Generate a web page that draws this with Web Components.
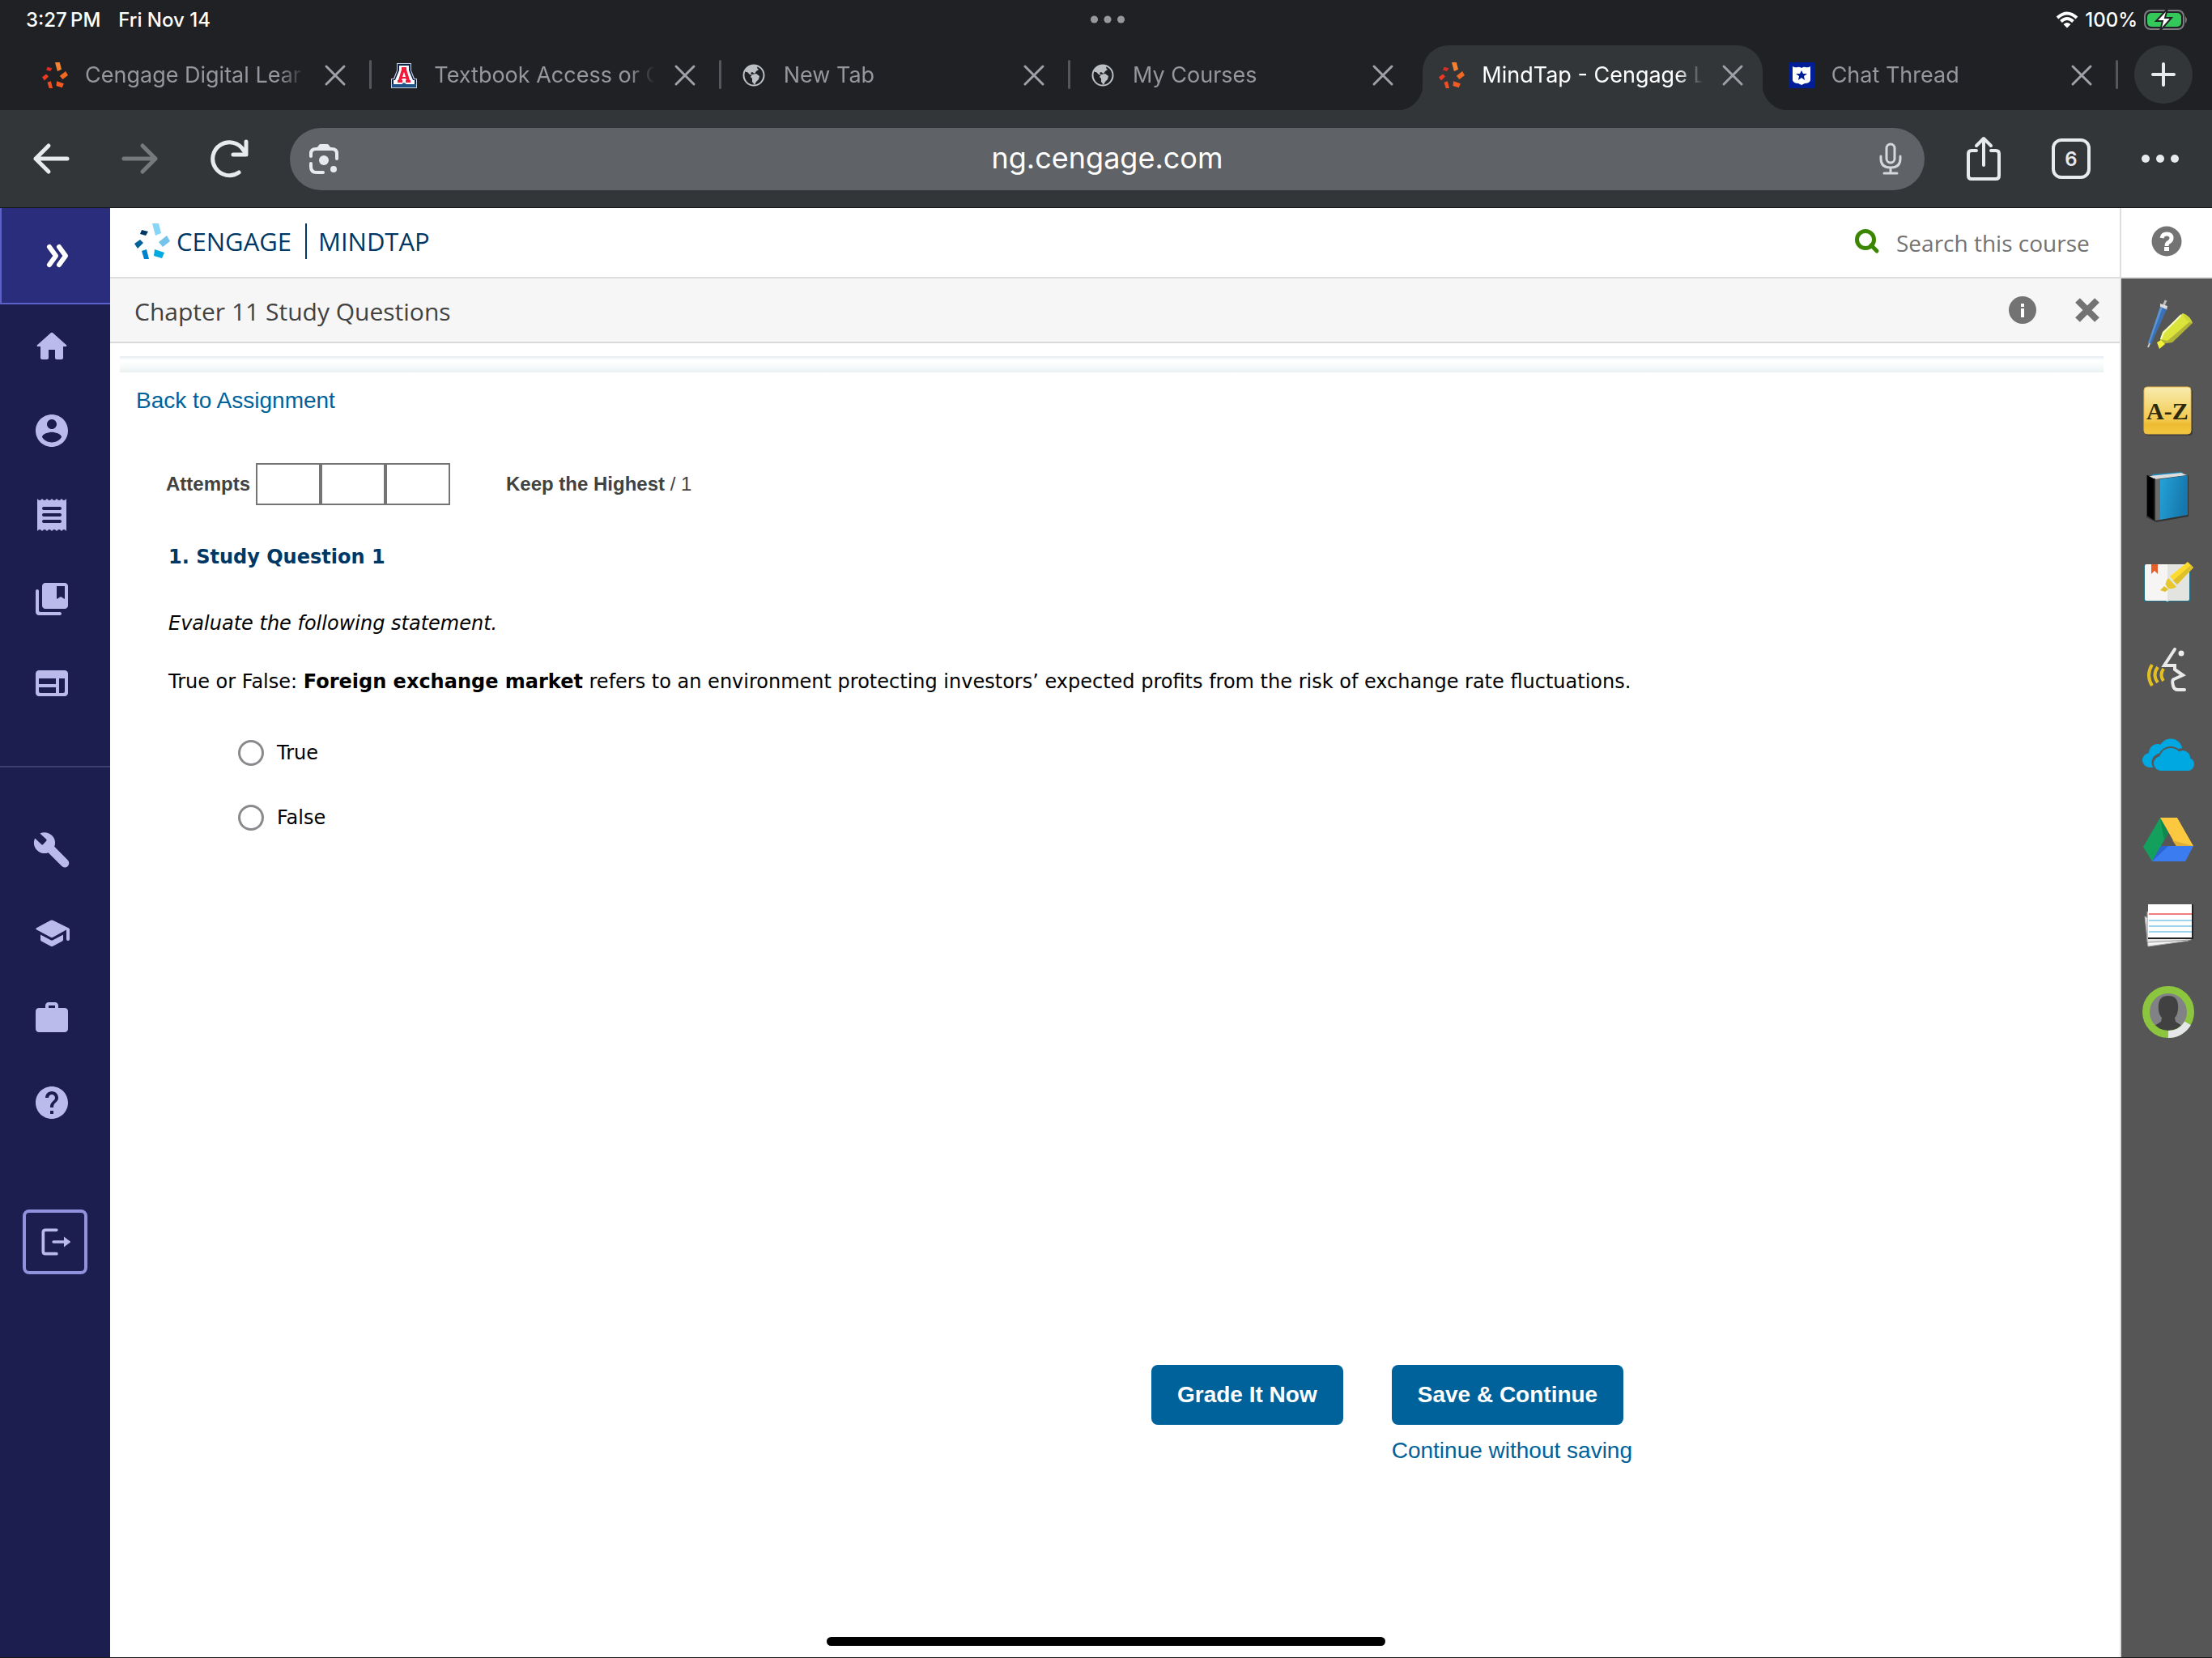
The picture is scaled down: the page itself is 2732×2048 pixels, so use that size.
<!DOCTYPE html>
<html lang="en">
    <head>
        <meta charset="UTF-8" />
        <meta name="viewport" content="width=device-width, initial-scale=1.0" />
        <title>MindTap - Cengage Learning</title>
        <style>
            body {
                --ui: Inter, "Liberation Sans", sans-serif;
                --brand: "Open Sans", "Noto Sans", sans-serif;
                --text: "Liberation Sans", Helvetica, Arial, sans-serif;
                --wide: "DejaVu Sans", Verdana, sans-serif;
                display: flex;
                flex-direction: column;
                box-sizing: border-box;
                min-height: 100vh;
                margin: 0;
                background: #fff;
                border-bottom: 1px solid #1a1a1a;
                font-family: var(--text);
            }
        </style>
    </head>
    <body>
        <browser-chrome>
            <status-bar></status-bar>
            <tab-strip>
                <browser-tab icon="cengage">Cengage Digital Lear</browser-tab>
                <browser-tab icon="arizona">Textbook Access or C</browser-tab>
                <browser-tab icon="globe">New Tab</browser-tab>
                <browser-tab icon="globe" last>My Courses</browser-tab>
                <browser-tab icon="cengage" active>MindTap - Cengage L</browser-tab>
                <browser-tab icon="shield">Chat Thread</browser-tab>
            </tab-strip>
            <tool-bar></tool-bar>
        </browser-chrome>
        <course-shell>
            <side-nav slot="nav"></side-nav>
            <course-header slot="header">Chapter 11 Study Questions</course-header>
            <study-question>
                <span slot="title">1. Study Question 1</span>
                <em slot="lead">Evaluate the following statement.</em>
                <span slot="body">True or False: <b>Foreign exchange market</b> refers to an environment protecting investors’ expected profits from the risk of exchange rate fluctuations.</span>
                <answer-option slot="answers" value="true">True</answer-option>
                <answer-option slot="answers" value="false">False</answer-option>
            </study-question>
            <app-dock slot="dock"></app-dock>
        </course-shell>
        <home-indicator></home-indicator>

        <script>
            // the six petals of the Cengage mark, clockwise from the top
            const star = (c) => `<svg viewBox="0 0 44 44">
                <path fill="${c[0]}" d="M22 0h8l3 12-7 3z"/>
                <path fill="${c[1]}" d="M40 15l4 7-9 7-5-6z"/>
                <path fill="${c[2]}" d="M25 32l12 4-3 7-10-3z"/>
                <path fill="${c[3]}" d="M9 34l6-2 3 12h-6z"/>
                <path fill="${c[4]}" d="M0 25l7-5 4 4-7 7z"/>
                <path fill="${c[5]}" d="M9 8l8 2-3 5-7-2z"/></svg>`;
            const material = (d) => `<svg viewBox="0 0 24 24" fill="currentColor" fill-rule="evenodd"><path d="${d}"/></svg>`;
            const line = (box, w, body) => `<svg viewBox="0 0 ${box}" fill="none" stroke="currentColor" stroke-width="${w}" stroke-linecap="round" stroke-linejoin="round">${body}</svg>`;

            const icons = {
                cengage: star(["#f58232", "#f26a21", "#f15a22", "#f04e23", "#ee3a24", "#dc2e27"]),
                brand: star(["#87d6f9", "#74c3ea", "#00a9e0", "#0082ca", "#00629b", "#003865"]),
                arizona: `<svg viewBox="0 0 32 32"><path fill="#c8d0dc" d="M7 1h18v9l4 10h3v12H0V20h3L7 10z"/><path fill="#0c234b" d="M8 2h16v8l4 11h3v7H1v-7h3L8 10z"/><path fill="#fff" d="M10 4h12v6l5 12h2v5H3v-5h2l5-12z"/><path fill="#ef1a3c" d="M13 6h6v3l4 13h1v3h-6v-3h1l-1-2h-4l-1 2h1v3H8v-3h1l4-13zm3 6l-2 6h4z"/><path fill="#1e5288" d="M1 27h12l3-2 3 2h12v4H1z"/></svg>`,
                globe: `<svg viewBox="0 0 32 32"><circle cx="16" cy="16" r="12.5" fill="#202124" stroke="#bdc1c6" stroke-width="2"/><path fill="#bdc1c6" d="M5 9C8 4 15 2 21 4l-1 3 2 2-3 2-2 3-3-2-2 1 2 3-3-1-3-3-2 0zM14 15l5-1 4 3-1 4-3 3-2 4-3-4v-4l-2-2z"/></svg>`,
                shield: `<svg viewBox="0 0 32 32"><path fill="#001e98" d="M0 0h32v32H0z"/><path fill="#fff" d="M5 5q3 2 6 1 2-1 5 1 3-2 5-1 3 1 6-1v17q-1 4-7 4l-4 2-4-2q-6 0-7-4z"/><path fill="#001e98" d="M16 10l2 4h5l-4 3 1 5-4-3-4 3 1-5-4-3h5z"/></svg>`,
                close: line("32 32", 3, `<path d="M5 5l22 22M27 5L5 27"/>`),
                plus: line("32 32", 4, `<path d="M16 3v26M3 16h26"/>`),
                wifi: `<svg viewBox="0 0 28 21" fill="none" stroke="#fff" stroke-width="4"><path d="M2 8q12-11 24 0M6.500 12.500q7.500-7 15 0"/><path fill="#fff" stroke="none" d="M9.500 16q4.500-4 9 0L14 20.500z"/></svg>`,
                battery: `<svg viewBox="0 0 56 28"><rect x="1" y="3" width="48" height="23" rx="7" fill="none" stroke="#7c7d80" stroke-width="2"/><rect x="4" y="6" width="42" height="17" rx="5" fill="#34c759"/><path fill="#7c7d80" d="M51 10q4 4 0 9z"/><path d="M29 1L15 16h8l-3 12 14-16h-8z" fill="#fff" stroke="#202124" stroke-width="2"/></svg>`,
                back: line("48 48", 5, `<path d="M44 24H5M21 8L5 24l16 16"/>`),
                forward: line("48 48", 5, `<path d="M4 24h39M27 8l16 16-16 16"/>`),
                reload: line("48 48", 5, `<path d="M36 41A20.500 20.500 0 1 1 42 14M45 3v16H29"/>`),
                lens: `<svg viewBox="0 0 40 40" fill="none" stroke="currentColor" stroke-width="4" stroke-linecap="round"><path d="M4 17v-3q0-6 6-6h20q6 0 6 6v6M4 26v4q0 7 7 7h8"/><path fill="currentColor" stroke="none" d="M10 8l5-6h10l5 6z"/><circle cx="20" cy="22" r="6" fill="currentColor" stroke="none"/><circle cx="32" cy="33" r="4" fill="currentColor" stroke="none"/></svg>`,
                mic: line("32 40", 3, `<rect x="11" y="2" width="10" height="23" rx="5"/><path d="M4 17v3q0 11 12 11t12-11v-3M16 31v7M8 38h16"/>`),
                share: line("44 56", 4, `<path d="M13 18H7q-4 0-4 4v27q0 4 4 4h30q4 0 4-4V22q0-4-4-4h-6M22 36V4M13 12l9-9 9 9"/>`),
                more: `<svg viewBox="0 0 48 12" fill="currentColor"><circle cx="6" cy="6" r="5"/><circle cx="24" cy="6" r="5"/><circle cx="42" cy="6" r="5"/></svg>`,
                expand: line("48 48", 6, `<path d="M14 13l8 11-8 11M26 13l8 11-8 11"/>`),
                home: material("M10 19v-5h4v5c0 .55.45 1 1 1h3c.55 0 1-.45 1-1v-7h1.700c.46 0 .68-.57.33-.87L12.670 3.600c-.38-.34-.96-.34-1.340 0l-8.360 7.530c-.34.3-.13.87.33.87H5v7c0 .55.45 1 1 1h3c.55 0 1-.45 1-1z"),
                account: material("M12 2C6.480 2 2 6.480 2 12s4.480 10 10 10 10-4.480 10-10S17.520 2 12 2zm0 3c1.660 0 3 1.340 3 3s-1.340 3-3 3-3-1.340-3-3 1.340-3 3-3zm0 14.200c-2.500 0-4.710-1.280-6-3.220.03-1.990 4-3.080 6-3.080 1.990 0 5.970 1.090 6 3.080-1.290 1.940-3.500 3.220-6 3.220z"),
                receipt: material("M3 2q1.500 2 3 0 1.500 2 3 0 1.500 2 3 0 1.500 2 3 0 1.500 2 3 0 1.500 2 3 0v20q-1.500-2-3 0-1.500-2-3 0-1.500-2-3 0-1.500-2-3 0-1.500-2-3 0-1.500-2-3 0zM7 7a1 1 0 0 0 0 2h10a1 1 0 0 0 0-2zM7 11a1 1 0 0 0 0 2h10a1 1 0 0 0 0-2zM7 15a1 1 0 0 0 0 2h10a1 1 0 0 0 0-2z"),
                library: material("M3 6c-.55 0-1 .45-1 1v13c0 1.100.9 2 2 2h13c.55 0 1-.45 1-1s-.45-1-1-1H5c-.55 0-1-.45-1-1V7c0-.55-.45-1-1-1zM20 2H8c-1.100 0-2 .9-2 2v12c0 1.100.9 2 2 2h12c1.100 0 2-.9 2-2V4c0-1.100-.9-2-2-2zm0 10l-2.500-1.500L15 12V4h5z"),
                web: material("M20 4H4c-1.100 0-2 .9-2 2v12c0 1.100.9 2 2 2h16c1.100 0 2-.9 2-2V6c0-1.100-.9-2-2-2zM4 9h10.500v3.500H4zM4 14.500h10.500V18H5q-1 0-1-1zM16.500 9H20v8q0 1-1 1h-2.500z"),
                wrench: material("M21.900 18.200l-8.300-8.300c.9-2.300.4-5-1.500-6.900-2-2-5-2.400-7.400-1.300L8.600 5.400q.5.500 0 1L6.600 8.500q-.5.500-1 0L1.600 4.700C.4 7.100.9 10.100 2.900 12.100c1.900 1.900 4.600 2.400 6.900 1.500l8.300 8.300a2.600 2.600 0 0 0 3.800-3.700z"),
                school: material("M5 12.200v3q0 .8.700 1.200l5.400 2.900q.9.500 1.800 0l5.400-2.900q.7-.4.700-1.200v-3l-6.100 3.300q-.9.500-1.800 0zM11.100 3.500L2.500 8.100q-.9.500 0 1l8.600 4.700q.9.500 1.800 0L21 9.300V15a1 1 0 0 0 2 0V9q0-.5-.5-.8L12.900 3.500q-.9-.5-1.800 0z"),
                work: material("M20 5.500h-4V4c0-1.100-.9-2-2-2h-4c-1.100 0-2 .9-2 2v1.500H4c-1.100 0-2 .9-2 2v11c0 1.100.9 2 2 2h16c1.100 0 2-.9 2-2v-11c0-1.100-.9-2-2-2zM10 4h4v1.500h-4z"),
                help: material("M12 2C6.480 2 2 6.480 2 12s4.480 10 10 10 10-4.480 10-10S17.520 2 12 2zm1 17h-2v-2h2v2zm2.070-7.750l-.9.920C13.450 12.900 13 13.500 13 15h-2v-.5c0-1.100.45-2.100 1.170-2.830l1.240-1.260c.37-.36.590-.86.590-1.410 0-1.100-.9-2-2-2s-2 .9-2 2H8c0-2.210 1.790-4 4-4s4 1.790 4 4c0 .88-.36 1.680-.93 2.250z"),
                exit: line("48 48", 4, `<path d="M26 8H11q-3 0-3 3v26q0 3 3 3h15M22 24h20"/><path fill="currentColor" stroke="none" d="M36 17l9 7-9 7z"/>`),
                search: `<svg viewBox="0 0 32 32" fill="none" stroke="#3a8600" stroke-width="5"><circle cx="14" cy="14" r="10.500"/><path stroke-linecap="round" d="M21 21l7 7"/></svg>`,
                question: `<svg viewBox="0 0 40 40"><circle cx="20" cy="20" r="18.500" fill="#737373"/><path fill="none" stroke="#fff" stroke-width="5" d="M14 16q1-5 6-5 6 0 6 5 0 3-3 5-3 1-3 5"/><path fill="#fff" d="M17 27h6v5h-6z"/></svg>`,
                info: `<svg viewBox="0 0 40 40"><circle cx="20" cy="20" r="17" fill="#737373"/><path fill="#fff" d="M18 12h4v4h-4zM18 18h4v11h-4z"/></svg>`,
                cross: `<svg viewBox="0 0 40 40" stroke="#737373" stroke-width="8"><path d="M8 8l24 24M32 8L8 32"/></svg>`,
                pens: `<svg viewBox="0 0 64 64"><path stroke="#bbb" stroke-width="3" d="M26 8l3-7"/><path fill="#ddd" d="M22 5l9 3-1 5-8-3z"/><path fill="#3b72b5" d="M22 9l8 3-19 43-4-1z"/><path fill="#5b93d3" d="M22 9l3 1L9 54H7z"/><path stroke="#ccc" stroke-width="2" d="M9 54l-2 5"/><path fill="#b1b436" d="M50 17q7 2 12 12L37 53l-14 2-1-6 3-9z"/><path fill="#dae43a" d="M50 17l10 9-29 25-9-2 3-9z"/><path fill="none" stroke="#f6f9c0" stroke-width="2" d="M48 19L26 41l-3 8"/><path fill="#cbd43a" d="M50 17q9 3 12 12-9-2-12-12z"/><path fill="#f3f03a" d="M18 53l5-3 5 5-7 6z"/></svg>`,
                glossary: `<svg viewBox="0 0 64 64"><linearGradient id="g" x2="0" y2="1"><stop stop-color="#f9ecb0"/><stop offset=".7" stop-color="#f2c94e"/><stop offset=".8" stop-color="#eebb30"/><stop offset="1" stop-color="#f1c741"/></linearGradient><rect x="4" y="4" width="58" height="58" rx="4" fill="#3c3c3c"/><rect x="2" y="2" width="58" height="58" rx="4" fill="url(#g)" stroke="#e9b640"/><text x="5" y="42" font-family="Liberation Serif, serif" font-size="30" font-weight="bold" fill="#2e290c">A-Z</text></svg>`,
                book: `<svg viewBox="0 0 64 64"><linearGradient id="g" x2="1" y2=".3"><stop stop-color="#25a3d8"/><stop offset="1" stop-color="#1577ad"/></linearGradient><path fill="#333" d="M5 5l52 0v51l-40 7-12-6z"/><path fill="#1b8fc4" d="M12 4l36-3 3 2-38 4z"/><path fill="#dcdcdc" d="M8 6l40-4 7 3-39 5z"/><path d="M6 5l9 5v51l-9-6z"/><path fill="#6b6b6b" d="M15 10h7v50l-7 1z"/><path fill="#222" d="M14 9h2v52h-2z"/><path fill="url(#g)" d="M22 10l34-5v49l-34 6z"/></svg>`,
                notebook: `<svg viewBox="0 0 64 64"><path fill="#1f6f86" d="M2 10h57v45H33l-2 2-3-2H2z"/><path fill="#f6f5f4" d="M5 9h26v46l-2-1H5q-2 0-2-2V11q0-2 2-2z"/><path fill="#e3e4e0" d="M31 9h25q2 0 2 2v41q0 2-2 2H33l-2 1z"/><path fill="#e65f2b" d="M11 9h8v12l-4-4-4 4z"/><path fill="#ffdb2d" d="M56 6l7 7-20 21-9-10z"/><path fill="#dfc02a" d="M60 10l3 3-20 21-5-5zM27 36l5 4-4 3-6-2z"/><path fill="#e7c72b" d="M32 26l10 11q-7 4-11 1-5-5 1-12z"/></svg>`,
                speak: `<svg viewBox="0 0 64 64" fill="none" stroke-width="4"><path stroke="#e9e9e9" stroke-linecap="round" d="M40 8L27 28h13v5l10 7-11 5q-3 1-1 8 1 5 6 5h8"/><circle cx="48" cy="13" r="3.500" fill="#eee"/><path stroke="#e3c022" d="M12 27q-8 13 0 26M19 30q-7 10 0 19M26 32q-5 8 0 15"/></svg>`,
                cloud: `<svg viewBox="0 0 64 64" fill="#00a8e2"><circle cx="9" cy="39" r="9"/><circle cx="19" cy="30" r="11"/><circle cx="35" cy="27" r="14.500"/><path d="M9 36h18v12H9z"/><g fill="#565656"><circle cx="23" cy="42" r="11.500"/><circle cx="35" cy="38" r="16"/><circle cx="50" cy="35" r="11"/></g><circle cx="23" cy="43" r="9"/><circle cx="35" cy="38" r="14"/><circle cx="50" cy="36" r="9"/><circle cx="56" cy="44" r="8"/><path d="M22 40h35v12H22z"/></svg>`,
                drive: `<svg viewBox="0 0 64 64"><path fill="#12a05c" d="M22 4l10 19-20 35L1 40z"/><path fill="#0c8a4d" d="M22 4l10 19-5 8z"/><path fill="#fbc840" d="M22 4h21l20 35H42z"/><path fill="#e0ae35" d="M37 32l26 7H42z"/><path fill="#3b7df0" d="M23 39h40L53 58H12z"/><path fill="#2b63cf" d="M23 39h9L12 58z"/></svg>`,
                cards: `<svg viewBox="0 0 64 64"><path fill="#f4f4f4" stroke="#aaa" d="M3 20l4 37 50-7z"/><path fill="#e4e4e4" stroke="#999" d="M6 14v38l54-3V14z"/><path fill="#fff" d="M7 5h55v42H7z"/><path fill="none" stroke="#222" stroke-width="2" d="M7 47h55V5"/><path stroke="#f07f7f" stroke-width="2" d="M8 17h53"/><path stroke="#9fd4ec" stroke-width="2" d="M8 25h53M8 32h53M8 39h53"/></svg>`,
                profile: `<svg viewBox="0 0 64 64"><circle cx="32" cy="32" r="24" fill="#808285"/><path fill="#414141" d="M15 49q5-3 8-5l1-5q-5-5-4-16 1-11 12-11t12 11q1 11-4 16l1 5q3 2 8 5-6 8-17 8t-17-8z"/><circle cx="32" cy="32" r="27.500" fill="none" stroke="#8cc63f" stroke-width="9"/><path fill="none" stroke="#e6e7e8" stroke-width="9" d="M32 59.500A27.500 27.500 0 0 0 56 46"/></svg>`,
            };

            const reset = `* { padding: 0; margin: 0; box-sizing: border-box; }
                :host { box-sizing: border-box; }
                button { border: 0; background: none; color: inherit; font: inherit; display: grid; place-items: center; }
                a { color: inherit; text-decoration: none; }
                input { min-width: 0; border: 0; background: none; outline: 0; }`;

            function define(name, css, html) {
                customElements.define(name, class extends HTMLElement {
                    constructor() {
                        super();
                        const temp = document.createElement("template");
                        const markup = typeof html === "function" ? html(this) : html;
                        temp.innerHTML = `<style>${reset} ${css}</style>${markup}`;
                        this.attachShadow({ mode: "open" }).append(temp.content.cloneNode(true));
                    }
                });
            }

            // size comes from --w / --h set by the parent
            define("ui-icon", `
                :host { display: block; flex: none; width: var(--w, 32px); height: var(--h, var(--w, 32px)); }
                svg { display: block; width: 100%; height: 100%; }
            `, (el) => icons[el.getAttribute("name")]);

            define("browser-chrome", `
                :host { display: block; background: #202124; font-family: var(--ui); border-bottom: 1px solid #151617; }
            `, `<slot></slot>`);

            define("status-bar", `
                :host { display: grid; grid-template-columns: 1fr auto 1fr; align-items: center; height: 56px; padding: 0 28px 8px 32px; color: #fff; font-size: 24px; font-weight: 500; }
                .left, .right { display: flex; align-items: center; }
                .left { gap: 22px; }
                .right { justify-content: flex-end; gap: 8px; }
                .dots { --w: 44px; --h: 12px; color: #98989c; }
                .wifi { --w: 28px; --h: 21px; }
                .battery { --w: 56px; --h: 28px; }
            `, `
                <div class="left"><span>3:27&#8239;PM</span><span>Fri Nov 14</span></div>
                <ui-icon class="dots" name="more"></ui-icon>
                <div class="right"><ui-icon class="wifi" name="wifi"></ui-icon><span>100%</span><ui-icon class="battery" name="battery"></ui-icon></div>
            `);

            define("tab-strip", `
                :host { display: flex; height: 80px; padding: 0 24px 0 26px; }
                .tabs { display: flex; flex: 1; min-width: 0; }
                button { width: 72px; height: 72px; margin-left: 22px; border-radius: 50%; background: #323639; color: #e8eaed; }
            `, `<div class="tabs"><slot></slot></div><button aria-label="New tab"><ui-icon name="plus"></ui-icon></button>`);

            define("browser-tab", `
                :host { position: relative; display: flex; flex: 1; min-width: 0; color: #96979e; padding: 0 6px; }
                .tab { display: flex; flex: 1; align-items: center; min-width: 0; padding: 0 21px 6px 20px; gap: 21px; }
                .title { flex: 1; min-width: 0; overflow: hidden; white-space: nowrap; font-size: 27px; line-height: 36px; text-align: left; mask-image: linear-gradient(to left, transparent, #000 32px); }
                .close { width: 32px; height: 32px; color: #a0a1a8; }
                :host(:not([active]):not([last]))::after { content: ""; position: absolute; right: -2px; top: 18px; width: 3px; height: 36px; border-radius: 2px; background: #56575c; }
                :host([active]) { color: #fff; z-index: 1; }
                :host([active]) .tab { position: relative; background: #323639; border-radius: 32px 32px 0 0; }
                :host([active]) .tab::before, :host([active]) .tab::after { content: ""; position: absolute; bottom: 0; width: 32px; height: 32px; }
                :host([active]) .tab::before { right: 100%; background: radial-gradient(circle at 0 0, transparent 32px, #323639 33px); }
                :host([active]) .tab::after { left: 100%; background: radial-gradient(circle at 100% 0, transparent 32px, #323639 33px); }
            `, (el) => `<div class="tab" role="tab"><ui-icon name="${el.getAttribute("icon")}"></ui-icon><span class="title"><slot></slot></span><button class="close" aria-label="Close tab"><ui-icon name="close"></ui-icon></button></div>`);

            define("tool-bar", `
                :host { display: flex; align-items: center; height: 120px; padding: 0 40px 0 39px; background: #323639; color: #e8eaed; }
                ui-icon { --w: 48px; }
                .nav { display: flex; gap: 62px; margin-right: 51px; }
                .forward { color: #77797b; }
                .url { display: flex; flex: 1; align-items: center; height: 77px; border-radius: 39px; background: #5f6368; padding: 0 22px; }
                .url button { width: 40px; height: 40px; }
                .lens { --w: 40px; }
                .mic { --w: 32px; --h: 40px; color: #d5d7da; }
                input { flex: 1; padding-bottom: 3px; text-align: center; color: #fff; font: 36px/44px var(--ui); }
                .actions { display: flex; align-items: center; gap: 62px; margin-left: 51px; }
                .share { --w: 44px; --h: 56px; }
                .count { width: 48px; height: 50px; border: 4px solid; border-radius: 12px; font-size: 24px; font-weight: 600; }
                .more { --w: 48px; --h: 12px; }
            `, `
                <div class="nav">
                    <button aria-label="Back"><ui-icon name="back"></ui-icon></button>
                    <button class="forward" aria-label="Forward" disabled><ui-icon name="forward"></ui-icon></button>
                    <button aria-label="Reload"><ui-icon name="reload"></ui-icon></button>
                </div>
                <div class="url">
                    <button aria-label="Lens"><ui-icon class="lens" name="lens"></ui-icon></button>
                    <input type="text" aria-label="Address" value="ng.cengage.com" />
                    <button aria-label="Voice search"><ui-icon class="mic" name="mic"></ui-icon></button>
                </div>
                <div class="actions">
                    <button aria-label="Share"><ui-icon class="share" name="share"></ui-icon></button>
                    <button class="count">6</button>
                    <button aria-label="More"><ui-icon class="more" name="more"></ui-icon></button>
                </div>
            `);

            define("course-shell", `
                :host { display: grid; flex: 1; grid-template-columns: 136px 1fr 114px; }
                main { min-width: 0; }
            `, `<slot name="nav"></slot><main><slot name="header"></slot><slot></slot></main><slot name="dock"></slot>`);

            define("side-nav", `
                :host { display: block; background: #1b1e4f; color: #babbea; }
                ui-icon { --w: 48px; }
                .toggle { width: 100%; height: 119px; padding-left: 4px; background: #2a2d7c; border: solid #5b60cb; border-width: 0 0 2px 2px; color: #fff; }
                nav { display: flex; flex-direction: column; gap: 56px; padding: 28px 0 78px 40px; }
                nav + nav { padding-top: 78px; padding-bottom: 0; border-top: 2px solid #3e4074; }
                .exit { width: 80px; height: 80px; margin: 108px 28px 0; border: 4px solid #9092de; border-radius: 8px; }
                .exit ui-icon { --w: 44px; }
            `, `
                <button class="toggle" aria-label="Expand menu"><ui-icon name="expand"></ui-icon></button>
                <nav>${["home", "account", "receipt", "library", "web"].map((n) => `<a href="#${n}" aria-label="${n}"><ui-icon name="${n}"></ui-icon></a>`).join("")}</nav>
                <nav>${["wrench", "school", "work", "help"].map((n) => `<a href="#${n}" aria-label="${n}"><ui-icon name="${n}"></ui-icon></a>`).join("")}</nav>
                <button class="exit" aria-label="Exit"><ui-icon name="exit"></ui-icon></button>
            `);

            define("course-header", `
                :host { display: block; font-family: var(--brand); }
                .top { display: flex; align-items: center; height: 87px; padding: 0 0 3px 30px; border-bottom: 2px solid #dedede; }
                .logo { --w: 44px; margin-right: 8px; }
                .brand { font-size: 31px; line-height: 44px; color: #003865; }
                .brand + .brand { margin-left: 17px; padding-left: 14px; border-left: 2px solid #003865; }
                label { display: flex; align-items: center; gap: 20px; margin-left: auto; }
                label ui-icon { --w: 32px; }
                input { width: 276px; padding-top: 4px; font: 28px/40px var(--brand); color: #737373; }
                input::placeholder { color: #737373; opacity: 1; }
                .bar { display: flex; align-items: center; height: 80px; padding: 0 20px 0 30px; background: #f6f6f6; border-bottom: 2px solid #dadada; color: #424242; }
                h1 { flex: 1; padding-top: 4px; font-size: 30px; font-weight: 400; line-height: 44px; }
                .bar ui-icon { --w: 40px; }
                .bar button + button { margin-left: 40px; }
            `, `
                <div class="top">
                    <ui-icon class="logo" name="brand"></ui-icon><span class="brand">CENGAGE</span><span class="brand">MINDTAP</span>
                    <label><ui-icon name="search"></ui-icon><input type="search" aria-label="Search this course" placeholder="Search this course" /></label>
                </div>
                <div class="bar"><h1><slot></slot></h1><button aria-label="Info"><ui-icon name="info"></ui-icon></button><button aria-label="Close"><ui-icon name="cross"></ui-icon></button></div>
            `);

            define("study-question", `
                :host { display: block; padding: 16px 20px 0 12px; }
                .banner { height: 20px; background: linear-gradient(#e4ecf1, #fff 25%, #fbfdfd 50%, #eaf1f1); }
                .back, .skip { color: #00629b; font-size: 28px; line-height: 30px; }
                .back { display: block; width: max-content; margin: 20px 0 0 20px; }
                .score { display: flex; align-items: center; margin: 62px 0 48px 57px; font-size: 24px; color: #424242; }
                .boxes { display: flex; margin: 0 69px 0 7px; }
                .boxes i { width: 80px; height: 52px; border: 2px solid #757575; }
                .question { padding-left: 60px; font: 24px/32px var(--wide); color: #000; }
                h2 { font-size: 24px; color: #003865; margin-bottom: 50px; }
                p { margin-bottom: 40px; }
                .answers { display: flex; flex-direction: column; gap: 48px; padding: 16px 0 0 86px; }
                .actions { display: flex; justify-content: flex-end; align-items: flex-start; gap: 60px; max-width: 1868px; margin-top: 660px; }
                .actions button { height: 74px; padding: 0 32px; border-radius: 8px; background: #00629b; color: #fff; font-size: 28px; font-weight: 700; }
                .skip { display: block; margin-top: 17px; }
            `, `
                <div class="banner"></div>
                <a class="back" href="#assignment">Back to Assignment</a>
                <div class="score"><b>Attempts</b><div class="boxes"><i></i><i></i><i></i></div><span><b>Keep the Highest</b> / 1</span></div>
                <div class="question">
                    <h2><slot name="title"></slot></h2>
                    <p><slot name="lead"></slot></p>
                    <p><slot name="body"></slot></p>
                    <div class="answers"><slot name="answers"></slot></div>
                </div>
                <div class="actions">
                    <button>Grade It Now</button>
                    <div><button>Save &amp; Continue</button><a class="skip" href="#next">Continue without saving</a></div>
                </div>
            `);

            define("answer-option", `
                :host { display: flex; }
                label { display: flex; align-items: center; gap: 16px; }
                input { appearance: none; width: 32px; height: 32px; border: 3px solid #8a8a8e; border-radius: 50%; }
            `, (el) => `<label><input type="radio" name="answer" value="${el.getAttribute("value")}" /><span><slot></slot></span></label>`);

            define("app-dock", `
                :host { display: flex; flex-direction: column; background: #565656; border-left: 2px solid #dedede; }
                ui-icon { --w: 64px; }
                .help { height: 87px; padding-bottom: 3px; background: #fff; border-bottom: 2px solid #dedede; }
                .help ui-icon { --w: 40px; }
                .apps { display: flex; flex-direction: column; align-items: center; gap: 42px; padding: 26px 0 0 4px; }
            `, `
                <button class="help" aria-label="Help"><ui-icon name="question"></ui-icon></button>
                <div class="apps">${["pens", "glossary", "book", "notebook", "speak", "cloud", "drive", "cards", "profile"].map((n) => `<button aria-label="${n}"><ui-icon name="${n}"></ui-icon></button>`).join("")}</div>
            `);

            define("home-indicator", `
                :host { position: fixed; left: 50%; bottom: 15px; width: 690px; height: 11px; margin-left: -345px; border-radius: 6px; background: #000; }
            `, ``);
        </script>
    </body>
</html>
